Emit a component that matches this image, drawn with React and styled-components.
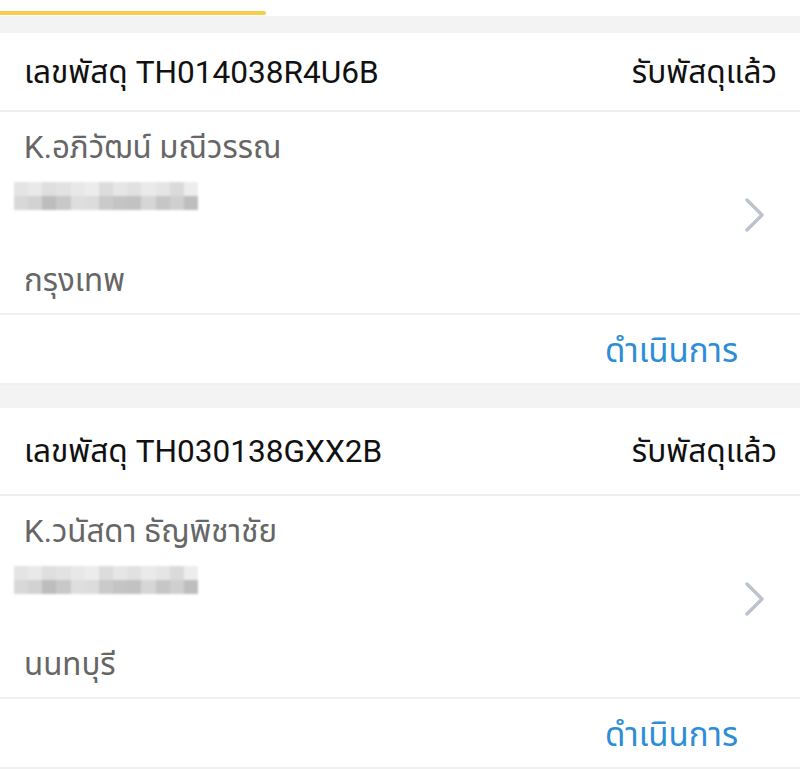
import React from "react";
import styled, { createGlobalStyle } from "styled-components";

const GlobalStyle = createGlobalStyle`
  body {
    margin: 0;
    background: #ffffff;
    font-family: Roboto, "Noto Sans Thai", "Noto Sans", sans-serif;
  }
`;

const parcels = [
  {
    id: "TH014038R4U6B",
    name: "K.อภิวัฒน์ มณีวรรณ",
    city: "กรุงเทพ",
    headH: 79,
    gapAfter: 23,
  },
  {
    id: "TH030138GXX2B",
    name: "K.วนัสดา ธัญพิชาชัย",
    city: "นนทบุรี",
    headH: 88,
    gapAfter: 0,
  },
];

const blurTop = ["#e4e4e4", "#e9e9e9", "#dedede", "#e2e2e2", "#e8e8e8", "#ececec", "#dcdcdc", "#e6e6e6", "#e1e1e1", "#eaeaea", "#e5e5e5", "#dadada", "#ededed"];
const blurBottom = ["#d8d8d8", "#d2d2d2", "#bdbdbd", "#c8c8c8", "#dedede", "#dcdcdc", "#cacaca", "#c4c4c4", "#c2c2c2", "#d6d6d6", "#c6c6c6", "#cfcfcf", "#bebebe"];

export default function App() {
  return (
    <Page>
      <GlobalStyle />
      <TabStrip>
        <TabIndicator />
      </TabStrip>
      <Gap $h={17} />
      {parcels.map((p) => (
        <React.Fragment key={p.id}>
          <Card>
            <CardHead $h={p.headH}>
              <TrackNo>เลขพัสดุ {p.id}</TrackNo>
              <Status>รับพัสดุแล้ว</Status>
            </CardHead>
            <CardBody>
              <Info>
                <Line>{p.name}</Line>
                <Blurred>
                  <BlurRow>
                    {blurTop.map((c, i) => (
                      <BlurCell key={i} $c={c} />
                    ))}
                  </BlurRow>
                  <BlurRow>
                    {blurBottom.map((c, i) => (
                      <BlurCell key={i} $c={c} />
                    ))}
                  </BlurRow>
                </Blurred>
                <City>{p.city}</City>
              </Info>
              <Chevron viewBox="0 0 24 36">
                <path
                  d="M5 3 L20 18 L5 33"
                  fill="none"
                  stroke="#bcc3ca"
                  strokeWidth="3.4"
                  strokeLinecap="round"
                  strokeLinejoin="round"
                />
              </Chevron>
            </CardBody>
            <CardFoot>
              <Action>ดำเนินการ</Action>
            </CardFoot>
          </Card>
          {p.gapAfter > 0 && <Gap $h={p.gapAfter} />}
        </React.Fragment>
      ))}
    </Page>
  );
}

const Page = styled.div`
  width: 800px;
  display: flex;
  flex-direction: column;
`;
const TabStrip = styled.div`
  height: 16px;
  padding-top: 11px;
  box-sizing: border-box;
  background: #ffffff;
`;
const TabIndicator = styled.div`
  width: 266px;
  height: 4px;
  background: #f6cd4c;
  border-radius: 0 2px 2px 0;
`;
const Gap = styled.div`
  height: ${(p) => p.$h}px;
  background: #f3f3f3;
`;
const Card = styled.div`
  background: #ffffff;
  display: flex;
  flex-direction: column;
`;
const CardHead = styled.div`
  height: ${(p) => p.$h}px;
  display: flex;
  justify-content: space-between;
  align-items: center;
  padding: 2px 23px 0 24px;
  box-sizing: border-box;
  border-bottom: 2px solid #f0f0f0;
  color: #111111;
  font-size: 31.6px;
`;
const TrackNo = styled.div``;
const Status = styled.div``;
const CardBody = styled.div`
  display: flex;
  align-items: center;
  justify-content: space-between;
  padding: 18px 34px 14px 0;
  border-bottom: 2px solid #f0f0f0;
`;
const Info = styled.div`
  display: flex;
  flex-direction: column;
`;
const Line = styled.div`
  padding-left: 24px;
  height: 36px;
  line-height: 36px;
  font-size: 31.3px;
  color: #666666;
`;
const City = styled(Line)`
  margin-top: 53px;
`;
const Blurred = styled.div`
  margin: 16px 0 0 14px;
  width: 184px;
  height: 28px;
  display: flex;
  flex-direction: column;
  filter: blur(1.2px);
`;
const BlurRow = styled.div`
  display: flex;
  flex: 1;
`;
const BlurCell = styled.div`
  flex: 1;
  background: ${(p) => p.$c};
`;
const Chevron = styled.svg`
  width: 24px;
  height: 36px;
`;
const CardFoot = styled.div`
  height: 70px;
  display: flex;
  align-items: center;
  justify-content: flex-end;
  padding: 6px 62px 0 0;
  box-sizing: border-box;
  border-bottom: 2px solid #f0f0f0;
`;
const Action = styled.div`
  font-size: 33px;
  color: #2d8dd6;
`;
